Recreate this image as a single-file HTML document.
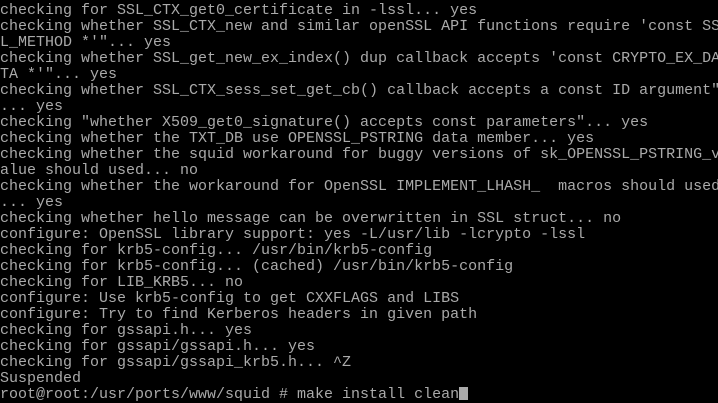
<!DOCTYPE html>
<html><head><meta charset="utf-8"><style>
html,body{margin:0;padding:0;background:#000;width:718px;height:402px;overflow:hidden}
pre{margin:0;position:absolute;left:0;top:3px;font-family:"Liberation Mono","DejaVu Sans Mono",monospace;font-size:15px;line-height:16px;color:#aaaaaa;white-space:pre}
.c{display:inline-block;width:9px;height:13px;background:#aaaaaa;vertical-align:-2px}
</style></head><body><pre>checking for SSL_CTX_get0_certificate in -lssl... yes
checking whether SSL_CTX_new and similar openSSL API functions require 'const SS
L_METHOD *'"... yes
checking whether SSL_get_new_ex_index() dup callback accepts 'const CRYPTO_EX_DA
TA *'"... yes
checking whether SSL_CTX_sess_set_get_cb() callback accepts a const ID argument"
... yes
checking "whether X509_get0_signature() accepts const parameters"... yes
checking whether the TXT_DB use OPENSSL_PSTRING data member... yes
checking whether the squid workaround for buggy versions of sk_OPENSSL_PSTRING_v
alue should used... no
checking whether the workaround for OpenSSL IMPLEMENT_LHASH_  macros should used
... yes
checking whether hello message can be overwritten in SSL struct... no
configure: OpenSSL library support: yes -L/usr/lib -lcrypto -lssl
checking for krb5-config... /usr/bin/krb5-config
checking for krb5-config... (cached) /usr/bin/krb5-config
checking for LIB_KRB5... no
configure: Use krb5-config to get CXXFLAGS and LIBS
configure: Try to find Kerberos headers in given path
checking for gssapi.h... yes
checking for gssapi/gssapi.h... yes
checking for gssapi/gssapi_krb5.h... ^Z
Suspended
root@root:/usr/ports/www/squid # make install clean<span class="c"></span></pre></body></html>
